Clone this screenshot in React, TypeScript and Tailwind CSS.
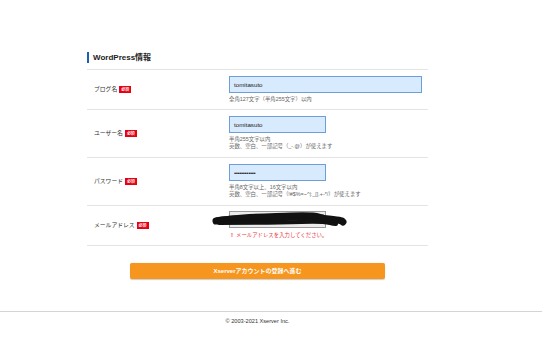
import React from 'react';

const font = 'font-["Liberation_Sans","Noto_Sans_CJK_JP",sans-serif]';

const Badge = () => (
  <span className="inline-flex items-center justify-center w-[12px] h-[7px] bg-[#e60012] text-white text-[4px] leading-none font-bold">
    必須
  </span>
);

interface RowProps {
  label: string;
  height: string;
  children: React.ReactNode;
}

const Row: React.FC<RowProps> = ({ label, height, children }) => (
  <div className={`grid grid-cols-[142px_1fr] border-b border-[#e4e4e4] ${height}`}>
    <div className="flex items-center gap-[2px] pl-[7px] text-[5.8px] text-[#333]">
      <span>{label}</span>
      <Badge />
    </div>
    <div className="pt-[6px]">{children}</div>
  </div>
);

const Help: React.FC<{ lines: string[] }> = ({ lines }) => (
  <div className="mt-[3px] text-[5.4px] leading-[7px] text-[#666]">
    {lines.map((l) => (
      <div key={l} className="h-[7px]">
        {l}
      </div>
    ))}
  </div>
);

const inputCls =
  'flex items-center h-[17px] pl-[4px] bg-[#d8eafd] border border-[#6c9ed8] text-[6.2px] text-[#222]';

export default function App() {
  return (
    <div className={`w-[542px] h-[360px] bg-white overflow-hidden ${font}`}>
      <div className="pt-[52px] pl-[87px]">
        <div className="w-[341px]">
          <div className="flex items-center h-[11px] border-l-2 border-[#1f5fb3] pl-[4px] mb-[6px]">
            <span className="text-[8px] font-bold text-[#222]">WordPress情報</span>
          </div>
          <div className="border-t border-[#e4e4e4]">
            <Row label="ブログ名" height="h-[40px]">
              <div className={`${inputCls} w-[193px]`}>tomitasuto</div>
              <Help lines={['全角127文字（半角255文字）以内']} />
            </Row>
            <Row label="ユーザー名" height="h-[48px]">
              <div className={`${inputCls} w-[97px]`}>tomitasuto</div>
              <Help lines={['半角255文字以内', '英数、空白、一部記号（_-.@）が使えます']} />
            </Row>
            <Row label="パスワード" height="h-[48px]">
              <div className={`${inputCls} w-[97px] tracking-[-0.4px]`}>••••••••••••</div>
              <Help
                lines={['半角8文字以上、16文字以内', '英数、空白、一部記号（!#$%=~^|:_[].+-*/）が使えます']}
              />
            </Row>
            <div className="grid grid-cols-[142px_1fr] h-[40px] border-b border-[#e4e4e4]">
              <div className="flex items-center gap-[2px] pl-[7px] text-[5.8px] text-[#333]">
                <span>メールアドレス</span>
                <Badge />
              </div>
              <div className="pt-[5px]">
                <div className="relative w-[97px] h-[17px] bg-[#ececec] border border-[#9a9a9a]">
                  <svg
                    className="absolute left-[-19px] top-[0px]"
                    width="136"
                    height="16"
                    viewBox="0 0 136 16"
                  >
                    <path
                      d="M5 9 C 20 6, 40 7, 60 6 S 100 5, 118 7 S 130 9, 132 10"
                      stroke="#111"
                      strokeWidth="7"
                      strokeLinecap="round"
                      fill="none"
                    />
                    <path
                      d="M6 8 C 25 4, 50 4, 80 3 S 105 4, 112 5"
                      stroke="#111"
                      strokeWidth="5"
                      strokeLinecap="round"
                      fill="none"
                    />
                    <path
                      d="M8 11 C 30 11, 60 11, 90 10 S 115 11, 125 12"
                      stroke="#111"
                      strokeWidth="4"
                      strokeLinecap="round"
                      fill="none"
                    />
                  </svg>
                </div>
                <div className="mt-[4px] flex items-center gap-[3px] h-[7px] text-[5.4px] leading-[7px] text-[#e8383d]">
                  <span className="font-bold text-[6px] pl-[2px]">!</span>
                  <span>メールアドレスを入力してください。</span>
                </div>
              </div>
            </div>
          </div>
          <div className="flex justify-center mt-[17px]">
            <button className="w-[255px] h-[16px] rounded-[2px] bg-[#f7961e] text-white text-[6px] font-bold shadow-[0_0.5px_1px_rgba(0,0,0,0.2)]">
              Xserverアカウントの登録へ進む
            </button>
          </div>
        </div>
      </div>
      <div className="mt-[32px] border-t border-[#d4d4d4]">
        <div className="ml-[87px] w-[341px] pt-[5px] text-center text-[5.6px] text-[#333]">
          © 2003-2021 Xserver Inc.
        </div>
      </div>
    </div>
  );
}
